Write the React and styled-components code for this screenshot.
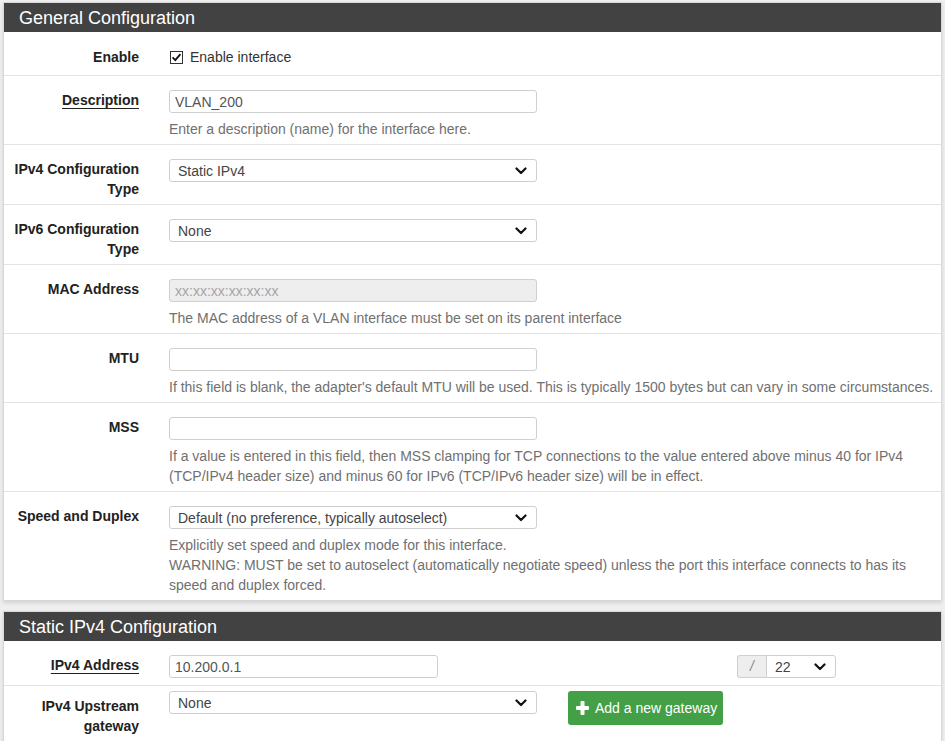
import React from 'react';
import styled, { createGlobalStyle } from 'styled-components';

const GlobalStyle = createGlobalStyle`
  body {
    margin: 0;
    background: #efefef;
    font-family: "Liberation Sans", Arial, sans-serif;
    font-size: 14px;
    line-height: 20px;
    color: #333;
  }
`;

const Page = styled.div`
  padding: 2px 3px 0;
`;

const Panel = styled.section`
  background: #fff;
  border: 1px solid #d8d8d8;
  box-shadow: 0 2px 4px rgba(0, 0, 0, 0.12);
  margin-bottom: 10px;
`;

const PanelHeading = styled.h2`
  margin: 0;
  height: 29px;
  padding: 0 15px;
  background: #424242;
  color: #fff;
  font-size: 18px;
  font-weight: normal;
  line-height: 30px;
`;

const Row = styled.div`
  display: grid;
  grid-template-columns: 135px 1fr;
  column-gap: 30px;
  padding: ${p => p.$top ?? 14}px 5px ${p => p.$bottom ?? 5}px 0;
  border-top: 1px solid #e3e3e3;
  &:first-of-type {
    border-top: none;
    padding-top: ${p => (p.$top ?? 14) + 1}px;
  }
`;

const Label = styled.div`
  text-align: right;
  font-weight: bold;
  color: #222;
  padding-top: ${p => p.$offset || 0}px;
  span {
    text-decoration: ${p => (p.$required ? 'underline' : 'none')};
    text-underline-offset: 3px;
  }
`;

const Field = styled.div`
  min-width: 0;
`;

const Inline = styled.div`
  display: flex;
  align-items: flex-start;
  gap: ${p => p.$gap || 0}px;
`;

const TextInput = styled.input`
  box-sizing: border-box;
  display: block;
  width: ${p => p.$width || 368}px;
  height: 23px;
  padding: 0 5px;
  border: 1px solid #cfcfcf;
  border-radius: 3px;
  background: ${p => (p.disabled ? '#eee' : '#fff')};
  font-family: inherit;
  font-size: 14px;
  color: #555;
  outline: none;
  &::placeholder {
    color: #a5a5a5;
  }
`;

const SelectWrap = styled.div`
  position: relative;
  width: ${p => p.$width || 368}px;
  height: 23px;
  flex: none;
`;

const Select = styled.select`
  box-sizing: border-box;
  width: 100%;
  height: 23px;
  padding: 0 24px 0 8px;
  border: 1px solid #cfcfcf;
  border-radius: ${p => (p.$joined ? '0 3px 3px 0' : '3px')};
  background: #fff;
  appearance: none;
  font-family: inherit;
  font-size: 14px;
  color: #444;
  outline: none;
`;

const Chevron = styled.svg`
  position: absolute;
  right: 10px;
  top: 8px;
  pointer-events: none;
`;

const Help = styled.p`
  margin: 6px 0 0;
  color: #707070;
`;

const CheckLabel = styled.label`
  display: flex;
  align-items: center;
  gap: 7px;
  height: 20px;
  color: #333;
`;

const CheckBox = styled.span`
  box-sizing: border-box;
  display: inline-flex;
  align-items: center;
  justify-content: center;
  width: 13px;
  height: 13px;
  margin-left: 1px;
  border: 1px solid #333;
  background: #fff;
`;

const CidrGroup = styled.div`
  display: flex;
  margin-left: 299px;
`;

const Addon = styled.span`
  box-sizing: border-box;
  width: 29px;
  height: 23px;
  border: 1px solid #cfcfcf;
  border-right: none;
  border-radius: 3px 0 0 3px;
  background: #eee;
  color: #888;
  font-style: italic;
  text-align: center;
  line-height: 21px;
`;

const Button = styled.button`
  display: inline-flex;
  align-items: center;
  gap: 6px;
  height: 34px;
  padding: 0 6px 0 8px;
  border: none;
  border-radius: 3px;
  background: #43a047;
  color: #fff;
  font-family: inherit;
  font-size: 14px;
  cursor: pointer;
`;

const ChevronIcon = () => (
  <Chevron width="12" height="8" viewBox="0 0 12 8">
    <path d="M1.5 1.5 L6 6 L10.5 1.5" fill="none" stroke="#111" strokeWidth="2.2" strokeLinecap="round" strokeLinejoin="round" />
  </Chevron>
);

const Dropdown = ({ value, width, joined }) => (
  <SelectWrap $width={width}>
    <Select defaultValue={value} $joined={joined}>
      <option>{value}</option>
    </Select>
    <ChevronIcon />
  </SelectWrap>
);

const PlusIcon = () => (
  <svg width="13" height="14" viewBox="0 0 13 14">
    <rect x="4.5" y="0" width="4" height="14" rx="1" fill="#fff" />
    <rect x="0" y="5" width="13" height="4" rx="1" fill="#fff" />
  </svg>
);

export default function App() {
  return (
    <Page>
      <GlobalStyle />
      <Panel>
        <PanelHeading>General Configuration</PanelHeading>
        <div>
          <Row $bottom={8}>
            <Label>Enable</Label>
            <Field>
              <CheckLabel>
                <CheckBox>
                  <svg width="11" height="11" viewBox="0 0 11 11">
                    <path d="M1.6 5.4 L4.3 8.2 L9.4 2.2" fill="none" stroke="#111" strokeWidth="1.8" />
                  </svg>
                </CheckBox>
                Enable interface
              </CheckLabel>
            </Field>
          </Row>
          <Row>
            <Label $required><span>Description</span></Label>
            <Field>
              <TextInput defaultValue="VLAN_200" />
              <Help>Enter a description (name) for the interface here.</Help>
            </Field>
          </Row>
          <Row>
            <Label>IPv4 Configuration Type</Label>
            <Field>
              <Dropdown value="Static IPv4" />
            </Field>
          </Row>
          <Row>
            <Label>IPv6 Configuration Type</Label>
            <Field>
              <Dropdown value="None" />
            </Field>
          </Row>
          <Row>
            <Label>MAC Address</Label>
            <Field>
              <TextInput disabled placeholder="xx:xx:xx:xx:xx:xx" />
              <Help>The MAC address of a VLAN interface must be set on its parent interface</Help>
            </Field>
          </Row>
          <Row>
            <Label>MTU</Label>
            <Field>
              <TextInput />
              <Help>If this field is blank, the adapter's default MTU will be used. This is typically 1500 bytes but can vary in some circumstances.</Help>
            </Field>
          </Row>
          <Row>
            <Label>MSS</Label>
            <Field>
              <TextInput />
              <Help>If a value is entered in this field, then MSS clamping for TCP connections to the value entered above minus 40 for IPv4 (TCP/IPv4 header size) and minus 60 for IPv6 (TCP/IPv6 header size) will be in effect.</Help>
            </Field>
          </Row>
          <Row>
            <Label>Speed and Duplex</Label>
            <Field>
              <Dropdown value="Default (no preference, typically autoselect)" />
              <Help>
                Explicitly set speed and duplex mode for this interface.
                <br />
                WARNING: MUST be set to autoselect (automatically negotiate speed) unless the port this interface connects to has its speed and duplex forced.
              </Help>
            </Field>
          </Row>
        </div>
      </Panel>
      <Panel>
        <PanelHeading>Static IPv4 Configuration</PanelHeading>
        <div>
          <Row $top={13} $bottom={7}>
            <Label $required><span>IPv4 Address</span></Label>
            <Field>
              <Inline>
                <TextInput $width={269} defaultValue="10.200.0.1" />
                <CidrGroup>
                  <Addon>/</Addon>
                  <Dropdown value="22" width={70} joined />
                </CidrGroup>
              </Inline>
            </Field>
          </Row>
          <Row $top={5} $bottom={14}>
            <Label $offset={5}>IPv4 Upstream gateway</Label>
            <Field>
              <Inline $gap={31}>
                <Dropdown value="None" />
                <Button type="button">
                  <PlusIcon />
                  Add a new gateway
                </Button>
              </Inline>
            </Field>
          </Row>
        </div>
      </Panel>
    </Page>
  );
}
